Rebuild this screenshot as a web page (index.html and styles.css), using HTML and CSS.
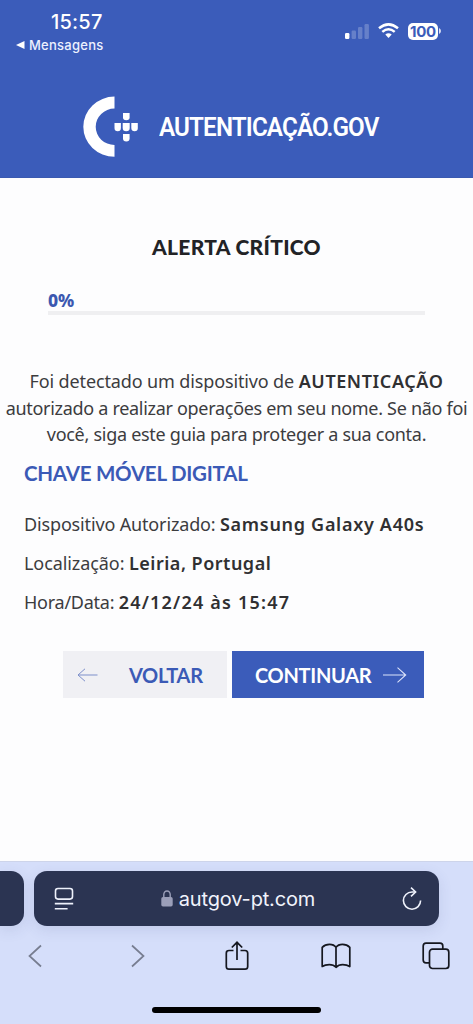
FILE: index.html
```
<!DOCTYPE html>
<html lang="pt">
<head>
<meta charset="utf-8">
<meta name="viewport" content="width=device-width, initial-scale=1">
<title>Autenticação.gov</title>
<link rel="stylesheet" href="styles.css">
</head>
<body>
<div class="screen">
  <header class="top">
    <div class="status">
      <div class="status-left">
        <div class="time">15:57</div>
        <div class="back-app">
          <svg width="9" height="8" viewBox="0 0 9 8"><path d="M0 4 8.500 0v8z" fill="#fff"/></svg>
          <span>Mensagens</span>
        </div>
      </div>
      <div class="status-right">
        <svg width="25" height="16" viewBox="0 0 25 16" fill="#fff"><rect x="0" y="10" width="4.4" height="6" rx="1.2"/><g opacity=".22"><rect x="6.6" y="7.5" width="4.4" height="8.500" rx="1.2"/><rect x="13" y="4" width="4.400" height="12" rx="1.200"/><rect x="19.500" y="1" width="4.400" height="15" rx="1.200"/></g></svg>
        <svg class="wifi" width="21" height="16" viewBox="0 0 21 16" fill="none" stroke="#fff" stroke-width="2.500"><path d="M1 5.300Q10.500-2.600 20 5.300"/><path d="M4.300 8.900Q10.500 3.500 16.700 8.900"/><path d="M7.300 11.600Q10.500 8.900 13.700 11.600L10.500 15z" fill="#fff" stroke="none"/></svg>
        <div class="battery">100</div>
        <svg width="2" height="6" viewBox="0 0 2 6"><path d="M0 0q2 1 2 3t-2 3z" fill="#dbe1f5"/></svg>
      </div>
    </div>
    <div class="brand">
      <svg width="56" height="62" viewBox="0 0 56 62" fill="#fff">
        <path d="M31.500 .6V12.600A18.800 18.200 0 0 0 31.500 49V60.800A31.200 30.100 0 0 1 31.500 .6z"/>
        <path d="M40 17h6.600v4.600q0 2.600-3.300 2.600T40 21.600z"/>
        <path d="M31.500 27h6.400v5q0 3.300-3.200 3.300t-3.200-3.300z"/>
        <path d="M39.700 27h7v5q0 3.300-3.500 3.300t-3.500-3.300z"/>
        <path d="M48.300 27h6.500v5q0 3.300-3.200 3.300t-3.300-3.300z"/>
        <path d="M40 38h6.600v4.600q0 3-3.300 3T40 42.600z"/>
      </svg>
      <div class="brand-name">AUTENTICAÇÃO.GOV</div>
    </div>
  </header>

  <main class="page">
    <h1 class="title"><span>ALERTA CRÍTICO</span></h1>
    <div class="progress">
      <div class="percent">0%</div>
      <div class="track"></div>
    </div>
    <p class="message">
      <span class="line l1">Foi detectado um dispositivo de <b>AUTENTICAÇÃO</b></span>
      <span class="line l2">autorizado a realizar operações em seu nome. Se não foi</span>
      <span class="line l3">você, siga este guia para proteger a sua conta.</span>
    </p>
    <h2 class="subtitle">CHAVE MÓVEL DIGITAL</h2>
    <div class="details">
      <div class="row r1">Dispositivo Autorizado: <b>Samsung Galaxy A40s</b></div>
      <div class="row r2">Localização: <b>Leiria, Portugal</b></div>
      <div class="row r3">Hora/Data: <b>24/12/24 às 15:47</b></div>
    </div>
    <div class="actions">
      <button class="btn back">
        <svg width="21" height="14" viewBox="0 0 21 14" fill="none" stroke="#7d8fca" stroke-width="1"><path d="M20.500 7H1M8 .8 1 7l7 6.200"/></svg>
        <span>VOLTAR</span>
      </button>
      <button class="btn next">
        <span>CONTINUAR</span>
        <svg width="24" height="16" viewBox="0 0 24 16" fill="none" stroke="#dce3fa" stroke-width="1.100"><path d="M0 8h22.500M14.500 .7 22.700 8l-8.200 7.300"/></svg>
      </button>
    </div>
  </main>

  <footer class="browser">
    <div class="tabs">
      <div class="tab-prev"></div>
      <div class="address">
        <svg width="20" height="24" viewBox="0 0 20 24" fill="none" stroke="#eef1fb" stroke-width="1.600"><rect x="1.500" y="1.500" width="17" height="10.600" rx="2.500"/><path d="M.8 16.600h18.400M.8 21.800h12.800"/></svg>
        <div class="host">
          <svg width="12" height="17" viewBox="0 0 12 17"><path d="M2.800 8V4.600a3.200 3.600 0 0 1 6.400 0V8" fill="none" stroke="#9b9fb9" stroke-width="1.400"/><rect x=".3" y="7" width="11.400" height="9.400" rx="1.700" fill="#9b9fb9"/></svg>
          <span>autgov-pt.com</span>
        </div>
        <svg width="20" height="23" viewBox="0 0 20 23" fill="none" stroke="#eef1fb" stroke-width="1.600"><path d="M13.200 5H10a8.600 8.600 0 1 0 8.600 8.600"/><path d="M9 .7 13.600 5 9 9.400"/></svg>
      </div>
    </div>
    <nav class="tools">
      <svg width="14" height="24" viewBox="0 0 14 24" fill="none" stroke="#777d90" stroke-width="1.700"><path d="M13 1.500 1.500 12 13 22.500"/></svg>
      <svg class="forward" width="14" height="24" viewBox="0 0 14 24" fill="none" stroke="#777d90" stroke-width="1.700"><path d="M1 1.500 12.500 12 1 22.500"/></svg>
      <svg class="share" width="24" height="30" viewBox="0 0 24 30" fill="none" stroke="#15171f" stroke-width="1.700"><path d="M8.500 9.500H4Q1.300 9.500 1.300 12.200V25.500Q1.300 28.200 4 28.200H20Q22.700 28.200 22.700 25.500V12.200Q22.700 9.500 20 9.500H15.500M12 19V1.500M6.800 6.500 12 1.300l5.200 5.200"/></svg>
      <svg class="book" width="30" height="26" viewBox="0 0 30 26" fill="none" stroke="#15171f" stroke-width="1.700" stroke-linejoin="round"><path d="M15 4.300Q13 1.300 8.500 1.300T1.200 4.300V23.500Q4 21.600 8.300 21.600T15 24.300Q17.500 21.600 21.700 21.600T28.800 23.500V4.300Q26 1.300 21.500 1.300T15 4.300V24"/></svg>
      <svg class="windows" width="28" height="28" viewBox="0 0 28 28" fill="none" stroke="#15171f" stroke-width="1.700"><path d="M7.500 20.800H4Q1.200 20.800 1.200 18V4Q1.200 1.200 4 1.200H18Q20.800 1.200 20.800 4V7.200"/><rect x="7.500" y="7.200" width="19.300" height="19.300" rx="3"/></svg>
    </nav>
    <div class="home"></div>
  </footer>
</div>
</body>
</html>
```
FILE: styles.css
```
* { box-sizing: border-box; }
body { margin: 0; background: #fdfdfe; }
svg { display: block; flex: none; }
.screen { width: 473px; height: 1024px; display: flex; flex-direction: column; overflow: hidden; background: #fdfdfe; }

.top { height: 178px; flex: none; background: #3b5cba; color: #fff; border-bottom: 1px solid #3a59b0; }
.status { height: 96px; display: flex; justify-content: space-between; padding: 10px 32px 0 16px; }
.time { font: 500 20px/24px Inter, sans-serif; letter-spacing: .2px; padding-left: 35px; }
.back-app { display: flex; align-items: center; gap: 4px; height: 22px; font: 500 13px/22px Inter, sans-serif; letter-spacing: .25px; color: #edf1ff; }
.status-right { display: flex; align-items: center; height: 22px; margin-top: 10px; }
.wifi { margin: 0 9px 0 8px; }
.battery { width: 30px; height: 17px; border-radius: 5px; background: #fff; color: #3b5cba; font: 700 15px/17px Inter, sans-serif; letter-spacing: -.3px; text-align: center; margin-right: 1px; }
.brand { display: flex; align-items: center; gap: 20px; padding-left: 83px; height: 62px; }
.brand-name { font: 600 25px/32px Roboto, sans-serif; letter-spacing: -.9px; white-space: nowrap; transform: scaleX(.968); transform-origin: left; margin-top: 2px; }

.page { flex: 1; }
.title { margin: 54px 0 0; text-align: center; font: 900 21px/30px Lato, sans-serif; letter-spacing: .3px; color: #222326; }
.progress { margin: 28px 48px 0; width: 377px; }
.percent { font: 800 17.500px/20px "Noto Sans", sans-serif; color: #3b58b0; }
.track { height: 4px; margin-top: 1px; background: #efeff1; }
.message { margin: 53px 0 0; font: 400 18px/26.700px "Noto Sans", sans-serif; color: #3c3c3e; }
.line { display: block; text-align: center; white-space: nowrap; }
.message b, .details b { font-weight: 600; color: #303032; }
.l1 { letter-spacing: -.13px; }
.l1 b { letter-spacing: .6px; }
.l2 { letter-spacing: -.3px; }
.l3 { letter-spacing: -.28px; }
.subtitle { margin: 10px 0 0 24px; font: 700 20.500px/30px Lato, sans-serif; letter-spacing: -.25px; color: #3b5ab6; }
.details { margin: 17px 0 0 24px; font: 400 18px/39px "Noto Sans", sans-serif; color: #3c3c3e; }
.row { white-space: nowrap; }
.r1 { letter-spacing: -.15px; }
.r1 b { letter-spacing: .7px; }
.r2 { letter-spacing: -.08px; }
.r2 b { letter-spacing: .5px; }
.r3 { letter-spacing: -.25px; }
.r3 b { letter-spacing: 1.200px; }
.actions { display: flex; gap: 5px; margin: 29px 0 0 63px; }
.btn { height: 47px; border: 0; display: flex; align-items: center; font: 700 20px/24px Lato, sans-serif; letter-spacing: -.3px; }
.back { width: 164px; padding: 0 0 0 14px; gap: 31px; background: #f0f0f4; color: #3b5ab6; }
.next { width: 192px; padding: 0 0 0 23px; gap: 12px; background: #3b5cba; color: #fff; }

.browser { height: 163px; flex: none; background: #d5defa; border-top: 1px solid #cdd4ea; }
.tabs { display: flex; gap: 10px; padding-top: 9px; }
.tab-prev { width: 24px; height: 55px; border-radius: 0 13px 13px 0; background: #2b3452; box-shadow: 0 4px 14px rgba(60,75,130,.13); }
.address { width: 405px; height: 55px; border-radius: 13px; background: #2b3452; box-shadow: 0 4px 14px rgba(60,75,130,.13); display: flex; align-items: center; justify-content: space-between; padding: 0 17px 0 20px; }
.host { display: flex; align-items: center; gap: 6px; color: #f1f3fc; font: 400 20px/26px Inter, sans-serif; letter-spacing: -.15px; }
.tools { display: flex; align-items: center; height: 60px; padding-left: 28px; }
.forward { margin-left: 89px; }
.share { margin-left: 80px; }
.book { margin-left: 72px; }
.windows { margin-left: 71px; }
.home { width: 169px; height: 6px; border-radius: 3px; background: #000; margin: 21px auto 0 152px; }
```
